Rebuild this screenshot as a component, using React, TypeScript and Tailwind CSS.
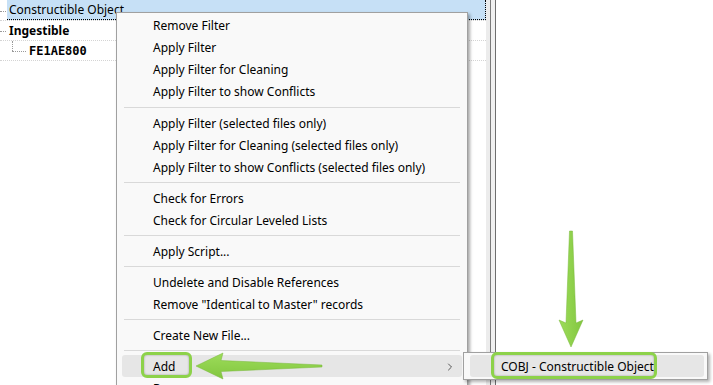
import { ChevronRight } from 'lucide-react';

const groups: string[][] = [
  ['Remove Filter', 'Apply Filter', 'Apply Filter for Cleaning', 'Apply Filter to show Conflicts'],
  [
    'Apply Filter (selected files only)',
    'Apply Filter for Cleaning (selected files only)',
    'Apply Filter to show Conflicts (selected files only)',
  ],
  ['Check for Errors', 'Check for Circular Leveled Lists'],
  ['Apply Script...'],
  ['Undelete and Disable References', 'Remove "Identical to Master" records'],
  ['Create New File...'],
];

const ui = { fontFamily: '"Segoe UI", "Noto Sans", "Open Sans", sans-serif' };

function Separator({ first }: { first?: boolean }) {
  return (
    <div className={first ? 'h-[10px] pt-[5px]' : 'h-[9px] pt-[4px]'}>
      <div className="mx-[2px] h-px bg-[#d9d9d9]"></div>
    </div>
  );
}

function Item({ label, active, sub }: { label: string; active?: boolean; sub?: boolean }) {
  return (
    <div className={`flex h-[22px] items-center rounded-[3px] pl-[31px] pt-px ${active ? 'bg-[#e6e6e6]' : ''}`}>
      <span>{label}</span>
      {sub && <ChevronRight className="ml-auto mr-[6px] text-[#333]" size={12} strokeWidth={1.6} />}
    </div>
  );
}

export default function App() {
  return (
    <div className="relative flex h-[385px] w-[713px] overflow-hidden bg-white text-[12px] text-[#000]" style={ui}>
      {/* tree panel */}
      <div className="flex w-[486px] flex-col">
        <div className="relative flex h-[21px] border-b border-dotted border-[#d4d4d4]">
          <div className="absolute left-0 top-[11px] w-[6px] border-t border-dotted border-[#9a9a9a]"></div>
          <div className="ml-[7px] flex flex-1 items-center border-b border-r border-dotted border-black bg-[#c6e0f6] pl-[2px] pt-px">
            Constructible Object
          </div>
        </div>
        <div className="relative flex h-[20px] items-center border-b border-dotted border-[#d4d4d4] pl-[9px] pt-px font-bold">
          <div className="absolute left-0 top-[10px] w-[6px] border-t border-dotted border-[#9a9a9a]"></div>
          Ingestible
        </div>
        <div className="relative flex h-[20px] items-center border-b border-dotted border-[#d4d4d4] pl-[29px] pt-px">
          <div className="absolute left-[12px] top-0 h-[10px] border-l border-dotted border-[#9a9a9a]"></div>
          <div className="absolute left-[12px] top-[10px] w-[14px] border-t border-dotted border-[#9a9a9a]"></div>
          <span className="font-bold" style={{ fontFamily: '"DejaVu Sans Mono", "Liberation Mono", monospace' }}>
            FE1AE800
          </span>
        </div>
      </div>

      {/* splitter */}
      <div className="w-[4px] bg-[#ececec]"></div>
      <div className="w-px bg-[#7a7a7a]"></div>
      <div className="w-[4px] bg-[#f0f0f0]"></div>
      <div className="w-px bg-[#6e6e6e]"></div>
      <div className="flex-1 bg-white"></div>

      {/* context menu */}
      <div className="absolute left-[116px] top-[12px] w-[352px] border border-[#a0a0a0] bg-[#f9f9f9] px-[5px] pt-px shadow-[2px_2px_3px_rgba(0,0,0,0.35)]">
        {groups.map((g, i) => (
          <div key={i}>
            {g.map((label) => (
              <Item key={label} label={label} />
            ))}
            <Separator first={i === 0} />
          </div>
        ))}
        <Item label="Add" active sub />
        <Item label="Remove" />
      </div>

      {/* submenu */}
      <div className="absolute left-[463px] top-[352px] h-[28px] w-[245px] border border-[#a0a0a0] bg-[#f9f9f9] py-[2px] pl-[6px] pr-[3px] shadow-[2px_2px_3px_rgba(0,0,0,0.3)]">
        <Item label="COBJ - Constructible Object" active />
      </div>

      {/* annotations */}
      <div className="absolute left-[141px] top-[352px] h-[26px] w-[51px] rounded-[6px] border-[3px] border-[#8dd24a] shadow-[inset_0_0_2px_rgba(0,0,0,0.35)]"></div>
      <div className="absolute left-[491px] top-[352px] h-[27px] w-[166px] rounded-[6px] border-[3px] border-[#8dd24a] shadow-[inset_0_0_2px_rgba(0,0,0,0.35)]"></div>
      <svg className="pointer-events-none absolute left-0 top-0" width="713" height="385" viewBox="0 0 713 385">
        <defs>
          <linearGradient id="ga" x1="0" y1="0" x2="0" y2="1">
            <stop offset="0" stopColor="#9ddc5a" />
            <stop offset="1" stopColor="#82c63f" />
          </linearGradient>
          <linearGradient id="gb" x1="0" y1="0" x2="1" y2="0">
            <stop offset="0" stopColor="#9ddc5a" />
            <stop offset="1" stopColor="#82c63f" />
          </linearGradient>
        </defs>
        <polygon
          points="322,365 322,367 221,371.5 223,379 196,366 223,353 221,360.5"
          fill="url(#ga)"
          stroke="#78b83a"
          strokeWidth="0.5"
        />
        <polygon
          points="569.5,231 572.5,231 576,323 583,320 571,347 559,320 566,323"
          fill="url(#gb)"
          stroke="#78b83a"
          strokeWidth="0.5"
        />
      </svg>
    </div>
  );
}
